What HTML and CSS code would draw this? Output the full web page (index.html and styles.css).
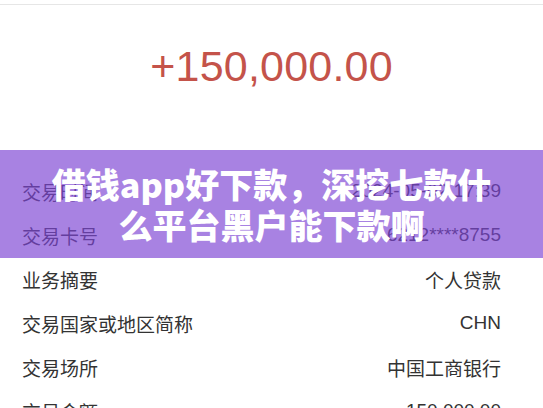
FILE: index.html
```html
<!DOCTYPE html>
<html lang="zh-CN">
<head>
  <meta charset="UTF-8">
  <title>借钱app好下款</title>
  <link rel="stylesheet" href="styles.css">
</head>
<body>
  <div class="page">
    <div class="amount">+150,000.00</div>

    <div class="rows">
      <div class="row"><span>交易时间</span><span>2024-05-02 17:39</span></div>
      <div class="row"><span>交易卡号</span><span>6212****8755</span></div>
      <div class="row"><span>业务摘要</span><span>个人贷款</span></div>
      <div class="row"><span>交易国家或地区简称</span><span>CHN</span></div>
      <div class="row"><span>交易场所</span><span>中国工商银行</span></div>
      <div class="row"><span>交易金额</span><span>150,000.00</span></div>
    </div>

    <!-- 标题横幅 -->
    <div class="banner">借钱app好下款，深挖七款什<br>么平台黑户能下款啊</div>
  </div>
</body>
</html>
```

FILE: styles.css
```css
body {
  margin: 0;
  background: #fff;
  font-family: "Liberation Sans", "Noto Sans CJK SC", sans-serif;
  color: #333;
  overflow: hidden;
}

.page {
  position: relative;
  height: 403px;
  overflow: hidden;
  border-top: 1px solid #e6e6e6;
  margin-top: 4px;
}

.amount {
  height: 164px;
  display: flex;
  justify-content: center;
  padding-top: 37px;
  box-sizing: border-box;
  font-size: 43px;
  color: #c4534a;
  letter-spacing: 0.2px;
}

.rows {
  padding: 0 42px 0 22px;
}

.row {
  height: 44px;
  display: flex;
  justify-content: space-between;
  align-items: center;
  font-size: 19px;
}

.banner {
  position: absolute;
  left: 0;
  right: 0;
  top: 145px;
  height: 108px;
  display: flex;
  justify-content: center;
  align-items: center;
  text-align: center;
  background: rgba(125, 69, 212, 0.67);
  color: #fff;
  font-family: "Noto Sans CJK SC", sans-serif;
  font-weight: 900;
  font-size: 34px;
  line-height: 41px;
}
```
